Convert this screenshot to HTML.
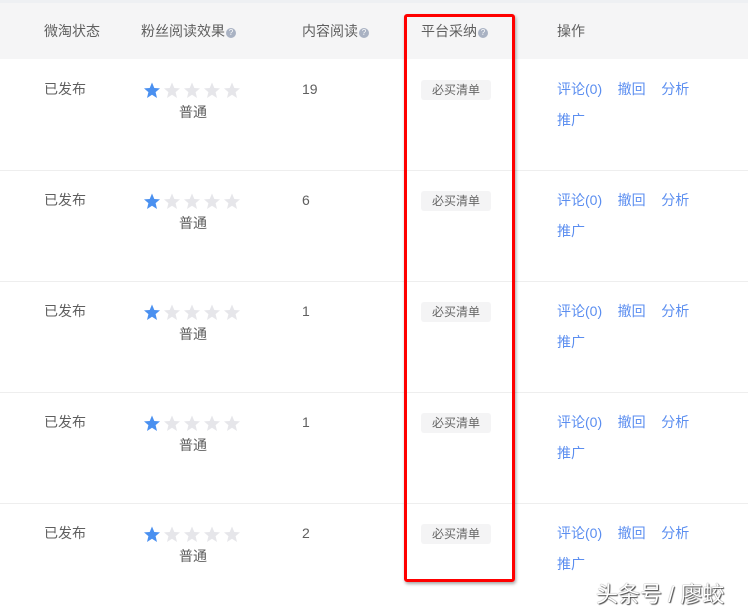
<!DOCTYPE html><html><head><meta charset="utf-8"><style>
*{margin:0;padding:0;box-sizing:border-box}
body{width:748px;height:613px;background:#fff;position:relative;overflow:hidden;font-family:"Liberation Sans","Noto Sans CJK SC",sans-serif;font-size:14px;color:#5f5f5f}
.a{position:absolute;white-space:nowrap;line-height:16px;margin-top:1px}
.hd{position:absolute;left:0;top:3px;width:748px;height:56px;background:#f5f5f6}
.top{position:absolute;left:0;top:0;width:748px;height:3px;background:#eef0f3}
.q{display:inline-block;width:10px;height:10px;border-radius:50%;background:#a9b2c3;color:#fff;font-size:8px;line-height:10px;text-align:center;vertical-align:1px;margin-left:1px}
.sep{position:absolute;left:0;width:748px;height:1px;background:#eeeeee}
.tag{position:absolute;left:421px;width:70px;height:20px;background:#f4f4f5;border-radius:3px;font-size:12px;color:#666;text-align:center;line-height:20px}
.blue{color:#5b8ef0}
.stars{position:absolute;left:143px}
.red{position:absolute;left:404px;top:14px;width:111px;height:568px;border:3px solid #f00;border-radius:3px;box-shadow:1px 2px 3px rgba(0,0,0,.35)}
</style></head><body>
<div class="top"></div><div class="hd"></div>
<div class="a" style="left:44px;top:22px">微淘状态</div>
<div class="a" style="left:141px;top:22px">粉丝阅读效果<span class="q">?</span></div>
<div class="a" style="left:302px;top:22px">内容阅读<span class="q">?</span></div>
<div class="a" style="left:421px;top:22px">平台采纳<span class="q">?</span></div>
<div class="a" style="left:557px;top:22px">操作</div>

<svg width="0" height="0" style="position:absolute"><defs><path id="st" d="M9 0.5L11.3 6 17 6.4 12.6 10.1 14 16 9 12.8 4 16 5.4 10.1 1 6.4 6.7 6Z"/></defs></svg>

<div class="a" style="left:44px;top:80px">已发布</div>
<svg class="stars" style="top:82px" width="100" height="18"><use href="#st" fill="#4a90f0"/><use href="#st" x="20" fill="#e6e6ea"/><use href="#st" x="40" fill="#e6e6ea"/><use href="#st" x="60" fill="#e6e6ea"/><use href="#st" x="80" fill="#e6e6ea"/></svg>
<div class="a" style="left:179px;top:103px">普通</div>
<div class="a" style="left:302px;top:80px">19</div>
<div class="tag" style="top:80px">必买清单</div>
<div class="a blue" style="left:557px;top:80px">评论(0)&nbsp;&nbsp;&nbsp;&nbsp;撤回&nbsp;&nbsp;&nbsp;&nbsp;分析</div>
<div class="a blue" style="left:557px;top:111px">推广</div>
<div class="sep" style="top:170px"></div>

<div class="a" style="left:44px;top:191px">已发布</div>
<svg class="stars" style="top:193px" width="100" height="18"><use href="#st" fill="#4a90f0"/><use href="#st" x="20" fill="#e6e6ea"/><use href="#st" x="40" fill="#e6e6ea"/><use href="#st" x="60" fill="#e6e6ea"/><use href="#st" x="80" fill="#e6e6ea"/></svg>
<div class="a" style="left:179px;top:214px">普通</div>
<div class="a" style="left:302px;top:191px">6</div>
<div class="tag" style="top:191px">必买清单</div>
<div class="a blue" style="left:557px;top:191px">评论(0)&nbsp;&nbsp;&nbsp;&nbsp;撤回&nbsp;&nbsp;&nbsp;&nbsp;分析</div>
<div class="a blue" style="left:557px;top:222px">推广</div>
<div class="sep" style="top:281px"></div>

<div class="a" style="left:44px;top:302px">已发布</div>
<svg class="stars" style="top:304px" width="100" height="18"><use href="#st" fill="#4a90f0"/><use href="#st" x="20" fill="#e6e6ea"/><use href="#st" x="40" fill="#e6e6ea"/><use href="#st" x="60" fill="#e6e6ea"/><use href="#st" x="80" fill="#e6e6ea"/></svg>
<div class="a" style="left:179px;top:325px">普通</div>
<div class="a" style="left:302px;top:302px">1</div>
<div class="tag" style="top:302px">必买清单</div>
<div class="a blue" style="left:557px;top:302px">评论(0)&nbsp;&nbsp;&nbsp;&nbsp;撤回&nbsp;&nbsp;&nbsp;&nbsp;分析</div>
<div class="a blue" style="left:557px;top:333px">推广</div>
<div class="sep" style="top:392px"></div>

<div class="a" style="left:44px;top:413px">已发布</div>
<svg class="stars" style="top:415px" width="100" height="18"><use href="#st" fill="#4a90f0"/><use href="#st" x="20" fill="#e6e6ea"/><use href="#st" x="40" fill="#e6e6ea"/><use href="#st" x="60" fill="#e6e6ea"/><use href="#st" x="80" fill="#e6e6ea"/></svg>
<div class="a" style="left:179px;top:436px">普通</div>
<div class="a" style="left:302px;top:413px">1</div>
<div class="tag" style="top:413px">必买清单</div>
<div class="a blue" style="left:557px;top:413px">评论(0)&nbsp;&nbsp;&nbsp;&nbsp;撤回&nbsp;&nbsp;&nbsp;&nbsp;分析</div>
<div class="a blue" style="left:557px;top:444px">推广</div>
<div class="sep" style="top:503px"></div>

<div class="a" style="left:44px;top:524px">已发布</div>
<svg class="stars" style="top:526px" width="100" height="18"><use href="#st" fill="#4a90f0"/><use href="#st" x="20" fill="#e6e6ea"/><use href="#st" x="40" fill="#e6e6ea"/><use href="#st" x="60" fill="#e6e6ea"/><use href="#st" x="80" fill="#e6e6ea"/></svg>
<div class="a" style="left:179px;top:547px">普通</div>
<div class="a" style="left:302px;top:524px">2</div>
<div class="tag" style="top:524px">必买清单</div>
<div class="a blue" style="left:557px;top:524px">评论(0)&nbsp;&nbsp;&nbsp;&nbsp;撤回&nbsp;&nbsp;&nbsp;&nbsp;分析</div>
<div class="a blue" style="left:557px;top:555px">推广</div>

<div class="red"></div>
<div class="a" style="left:596px;top:582px;font-size:22px;line-height:24px;color:#fff;text-shadow:0 0 1px #555,1px 1px 1px #444">头条号 / 廖蛟</div>
</body></html>
